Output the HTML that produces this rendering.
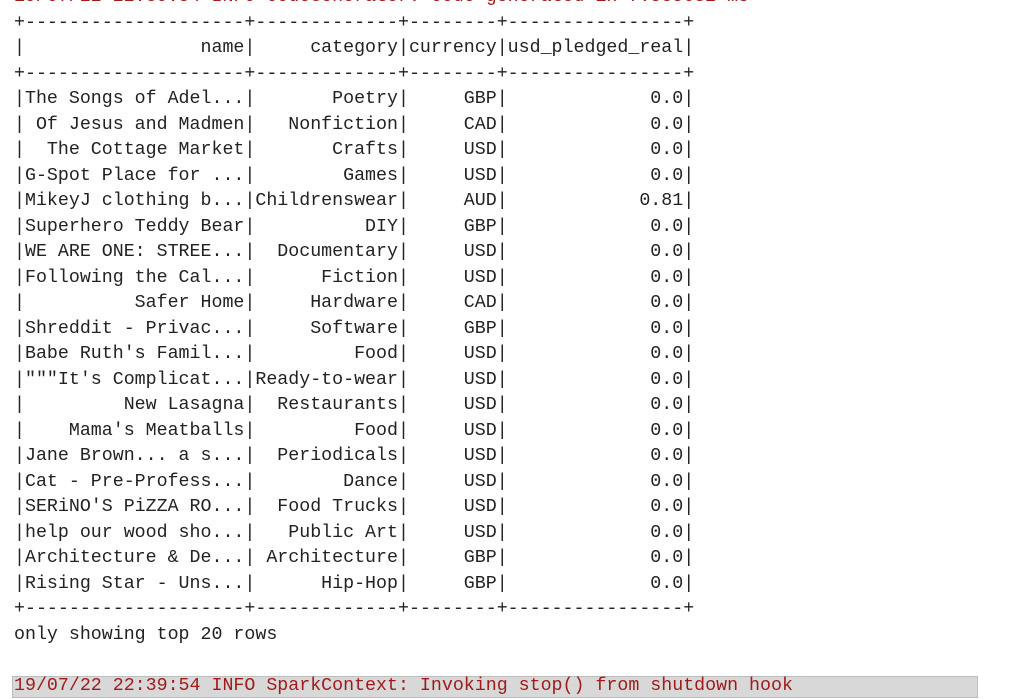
<!DOCTYPE html>
<html><head><meta charset="utf-8"><style>
html,body{margin:0;padding:0;background:#fff;width:1027px;height:692px;overflow:hidden;}
pre{position:absolute;left:14px;top:-15px;margin:0;font-family:"Liberation Mono",monospace;font-size:18.3px;line-height:25.5px;color:#222;}
.r{color:#a11b1b;}
.bar{position:absolute;left:12px;top:676px;width:964px;height:20px;background:#d8d8d8;border:1px solid #bdbdbd;}
</style></head><body>
<div class="bar"></div>
<pre><span class="r">19/07/22 22:39:54 INFO CodeGenerator: Code generated in 7.535632 ms</span>
+--------------------+-------------+--------+----------------+
|                name|     category|currency|usd_pledged_real|
+--------------------+-------------+--------+----------------+
|The Songs of Adel...|       Poetry|     GBP|             0.0|
| Of Jesus and Madmen|   Nonfiction|     CAD|             0.0|
|  The Cottage Market|       Crafts|     USD|             0.0|
|G-Spot Place for ...|        Games|     USD|             0.0|
|MikeyJ clothing b...|Childrenswear|     AUD|            0.81|
|Superhero Teddy Bear|          DIY|     GBP|             0.0|
|WE ARE ONE: STREE...|  Documentary|     USD|             0.0|
|Following the Cal...|      Fiction|     USD|             0.0|
|          Safer Home|     Hardware|     CAD|             0.0|
|Shreddit - Privac...|     Software|     GBP|             0.0|
|Babe Ruth's Famil...|         Food|     USD|             0.0|
|"""It's Complicat...|Ready-to-wear|     USD|             0.0|
|         New Lasagna|  Restaurants|     USD|             0.0|
|    Mama's Meatballs|         Food|     USD|             0.0|
|Jane Brown... a s...|  Periodicals|     USD|             0.0|
|Cat - Pre-Profess...|        Dance|     USD|             0.0|
|SERiNO'S PiZZA RO...|  Food Trucks|     USD|             0.0|
|help our wood sho...|   Public Art|     USD|             0.0|
|Architecture &amp; De...| Architecture|     GBP|             0.0|
|Rising Star - Uns...|      Hip-Hop|     GBP|             0.0|
+--------------------+-------------+--------+----------------+
only showing top 20 rows

<span class="r">19/07/22 22:39:54 INFO SparkContext: Invoking stop() from shutdown hook</span></pre>
</body></html>
